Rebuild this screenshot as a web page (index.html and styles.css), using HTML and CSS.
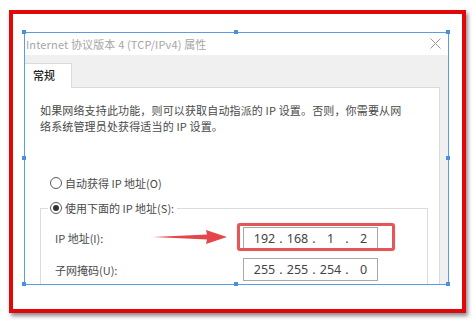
FILE: index.html
```html
<!DOCTYPE html>
<html lang="zh-CN">
<head>
<meta charset="utf-8">
<title>IPv4 属性</title>
<link rel="stylesheet" href="styles.css">
</head>
<body>
<div class="frame">
  <div class="dialog">
    <div class="titlebar">
      <span class="title">Internet 协议版本 4 (TCP/IPv4) 属性</span>
      <svg class="close" width="11" height="11" viewBox="0 0 11 11"><path d="M0.5 0.5 L10.5 10.5 M10.5 0.5 L0.5 10.5" stroke="#9a9a9a" stroke-width="1" fill="none"/></svg>
    </div>
    <div class="tabstrip">
      <div class="tab">常规</div>
    </div>
    <div class="body">
      <div class="panel">
        <p class="intro">如果网络支持此功能，则可以获取自动指派的 IP 设置。否则，你需要从网<br>络系统管理员处获得适当的 IP 设置。</p>
        <div class="radio-row"><span class="radio"></span>自动获得 IP 地址(O)</div>
        <fieldset class="group">
          <legend class="legend"><span class="radio checked"></span>使用下面的 IP 地址(S):</legend>
          <div class="row">
            <span class="label">IP 地址(I):</span>
            <div class="ipbox"><span class="oct">192</span><span class="dot">.</span><span class="oct">168</span><span class="dot">.</span><span class="oct">1</span><span class="dot">.</span><span class="oct">2</span></div>
          </div>
          <div class="row row2">
            <span class="label">子网掩码(U):</span>
            <div class="ipbox"><span class="oct">255</span><span class="dot">.</span><span class="oct">255</span><span class="dot">.</span><span class="oct">254</span><span class="dot">.</span><span class="oct">0</span></div>
          </div>
        </fieldset>
      </div>
      <div class="gutter"></div>
    </div>
  </div>
  <span class="handle h-tl"></span><span class="handle h-tm"></span><span class="handle h-tr"></span>
  <span class="handle h-ml"></span><span class="handle h-mr"></span>
  <span class="handle h-bl"></span><span class="handle h-bm"></span><span class="handle h-br"></span>
  <div class="highlight"></div>
  <svg class="arrow" width="76" height="16" viewBox="0 0 76 16"><path d="M0 8 L54 5.5 L53 1 L74 8 L53 15 L54 10.5 Z" fill="#e4474b"/></svg>
</div>
</body>
</html>
```
FILE: styles.css
```css
* { box-sizing: border-box; }
html, body { margin: 0; padding: 0; background: #ffffff; }
body {
  width: 476px;
  height: 325px;
  overflow: hidden;
  font-family: "Noto Sans CJK SC", "Noto Sans", sans-serif;
  color: #444;
}
.frame {
  position: relative;
  margin: 10px 0 0 9px;
  width: 457px;
  height: 303px;
  border: 4px solid #e1080b;
  background: #fff;
  padding: 18px 0 0 11px;
  box-shadow: 2px 3px 4px rgba(0, 0, 0, 0.45);
}
.dialog {
  width: 425px;
  height: 253px;
  border: 1px solid #5d9ce0;
  overflow: hidden;
  background: #f0f0f0;
  display: flex;
  flex-direction: column;
}
.titlebar {
  height: 22px;
  flex: none;
  background: #fff;
  display: flex;
  align-items: center;
  justify-content: space-between;
  padding: 0 7px 0 1px;
}
.title {
  font-size: 11px;
  color: #a6a6a6;
  line-height: 16px;
  letter-spacing: 0.15px;
}
.close { display: block; margin-top: -2px; }
.tabstrip {
  height: 32px;
  flex: none;
  background: #f0f0f0;
  display: flex;
  align-items: flex-end;
  position: relative;
  z-index: 1;
}
.tab {
  width: 47px;
  height: 25px;
  margin-bottom: -1px;
  background: #fff;
  border-top: 1px solid #dadada;
  border-right: 1px solid #dadada;
  font-size: 11px;
  color: #222;
  line-height: 22px;
  padding-left: 8px;
  font-weight: 500;
}
.body {
  flex: 1;
  display: flex;
}
.panel {
  width: 415px;
  flex: none;
  background: #fff;
  border-top: 1px solid #dadada;
  border-right: 1px solid #dadada;
  padding-left: 15px;
}
.gutter { flex: 1; background: #f0f0f0; }
.intro {
  margin: 14px 0 0 0;
  font-size: 11px;
  line-height: 16px;
  color: #4a4a4a;
  letter-spacing: 0.15px;
}
.radio-row {
  margin-top: 41px;
  height: 16px;
  display: flex;
  align-items: center;
  padding-left: 10px;
  font-size: 11px;
  color: #4a4a4a;
}
.radio {
  width: 12px;
  height: 12px;
  border: 1px solid #5a5a5a;
  border-radius: 50%;
  margin-right: 3px;
  flex: none;
  display: inline-block;
  position: relative;
  background: #fff;
}
.radio.checked::after {
  content: "";
  position: absolute;
  left: 2px;
  top: 2px;
  width: 6px;
  height: 6px;
  border-radius: 50%;
  background: #333;
}
.group {
  margin: 9px 0 0 0;
  width: 388px;
  border: 1px solid #dcdcdc;
  padding: 0 0 30px 0;
  min-width: 0;
}
.legend {
  margin-left: 7px;
  padding: 0 3px 0 2px;
  height: 16px;
  display: flex;
  align-items: center;
  font-size: 11px;
  color: #4a4a4a;
}
.row {
  margin-top: 11px;
  height: 22px;
  display: flex;
  align-items: center;
  padding-left: 14px;
}
.row2 { margin-top: 9px; height: 23px; }
.label {
  width: 188px;
  flex: none;
  font-size: 11px;
  color: #4a4a4a;
}
.ipbox {
  width: 135px;
  height: 100%;
  border: 1px solid #a8a8a8;
  background: #fff;
  display: flex;
  align-items: center;
  padding-left: 8px;
  font-family: "Noto Sans", "Open Sans", sans-serif;
  font-size: 12.5px;
  color: #444;
}
.oct { width: 25px; text-align: center; }
.dot { width: 8px; text-align: center; }
.handle {
  position: absolute;
  width: 4px;
  height: 4px;
  background: #4a8fe0;
}
.h-tl { left: 9px; top: 16px; }
.h-tm { left: 221px; top: 16px; }
.h-tr { left: 433px; top: 16px; }
.h-ml { left: 9px; top: 142px; }
.h-mr { left: 433px; top: 142px; }
.h-bl { left: 9px; top: 268px; }
.h-bm { left: 221px; top: 268px; }
.h-br { left: 433px; top: 268px; }
.highlight {
  position: absolute;
  left: 224px;
  top: 209px;
  width: 158px;
  height: 28px;
  border: 3px solid #e35659;
  border-radius: 3px;
  box-shadow: 0 0 1px rgba(227, 86, 89, 0.6);
}
.arrow {
  position: absolute;
  left: 140px;
  top: 215px;
}
```
